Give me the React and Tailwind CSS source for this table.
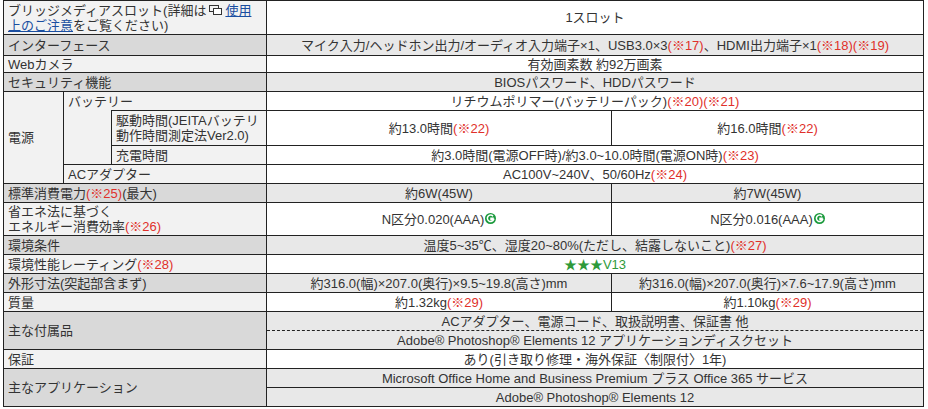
import React from 'react';

const B = 'border border-[#222] p-0';
const L1 = `${B} bg-[#f2f2f2] pl-1 text-left align-middle`;
const L2 = `${B} bg-[#d9d9d9] pl-1 text-left align-middle`;
const V1 = `${B} bg-white text-center align-middle`;
const V2 = `${B} bg-[#e8e8e8] text-center align-middle`;

const R = ({ children }) => <span className="text-[#e0302a]">{children}</span>;

const Eco = () => (
  <svg width="11" height="11" viewBox="0 0 11 11" className="inline-block align-top ml-px mt-[1px]">
    <circle cx="5.5" cy="5.5" r="5.5" fill="#1a9a3c" />
    <path d="M8 3.2 A3.2 3.2 0 1 0 8.6 6.4 L6 6.4 L6 5.2 L8.8 5.2" fill="none" stroke="#fff" strokeWidth="1.5" />
  </svg>
);

const WinIcon = () => (
  <svg width="13" height="10" viewBox="0 0 13 10" className="inline-block align-middle mx-[3px] -mt-[2px]">
    <rect x="0.5" y="0.5" width="9" height="6" fill="none" stroke="#333" />
    <rect x="4.5" y="3.5" width="8" height="6" fill="#fff" stroke="#333" />
  </svg>
);

export default function App() {
  return (
    <div className="bg-white w-[928px] h-[409px] overflow-hidden text-[13px] leading-[15px] text-[#333]"
      style={{ fontFamily: '"Liberation Sans","Noto Sans CJK JP",sans-serif' }}>
      <table className="ml-[3px] w-[920px] table-fixed border-collapse">
        <colgroup>
          <col className="w-[60px]" />
          <col className="w-[48px]" />
          <col className="w-[155px]" />
          <col className="w-[345px]" />
          <col className="w-[312px]" />
        </colgroup>
        <tbody>
          <tr className="h-[34px]">
            <td colSpan={3} className={L1}>
              ブリッジメディアスロット(詳細は<WinIcon /><a className="text-[#1a4ea0] underline">使用<br />上のご注意</a>をご覧ください)
            </td>
            <td colSpan={2} className={V1}>1スロット</td>
          </tr>
          <tr className="h-[21px]">
            <td colSpan={3} className={L2}>インターフェース</td>
            <td colSpan={2} className={V2}>マイク入力/ヘッドホン出力/オーディオ入力端子×1、USB3.0×3<R>(※17)</R>、HDMI出力端子×1<R>(※18)(※19)</R></td>
          </tr>
          <tr className="h-[17px]">
            <td colSpan={3} className={L1}>Webカメラ</td>
            <td colSpan={2} className={V1}>有効画素数 約92万画素</td>
          </tr>
          <tr className="h-[19px]">
            <td colSpan={3} className={L2}>セキュリティ機能</td>
            <td colSpan={2} className={V2}>BIOSパスワード、HDDパスワード</td>
          </tr>
          <tr className="h-[19px]">
            <td rowSpan={4} className={L1}>電源</td>
            <td colSpan={2} className={L1}>バッテリー</td>
            <td colSpan={2} className={V1}>リチウムポリマー(バッテリーパック)<R>(※20)(※21)</R></td>
          </tr>
          <tr className="h-[35px]">
            <td rowSpan={2} className={`${B} bg-[#f2f2f2] [border-top-style:hidden]`}></td>
            <td className={L1}>駆動時間(JEITAバッテリ<br />動作時間測定法Ver2.0)</td>
            <td className={V1}>約13.0時間<R>(※22)</R></td>
            <td className={V1}>約16.0時間<R>(※22)</R></td>
          </tr>
          <tr className="h-[19px]">
            <td className={L1}>充電時間</td>
            <td colSpan={2} className={V1}>約3.0時間(電源OFF時)/約3.0~10.0時間(電源ON時)<R>(※23)</R></td>
          </tr>
          <tr className="h-[19px]">
            <td colSpan={2} className={L1}>ACアダプター</td>
            <td colSpan={2} className={V1}>AC100V~240V、50/60Hz<R>(※24)</R></td>
          </tr>
          <tr className="h-[19px]">
            <td colSpan={3} className={L2}>標準消費電力<R>(※25)</R>(最大)</td>
            <td className={V2}>約6W(45W)</td>
            <td className={V2}>約7W(45W)</td>
          </tr>
          <tr className="h-[33px]">
            <td colSpan={3} className={L1}>省エネ法に基づく<br />エネルギー消費効率<R>(※26)</R></td>
            <td className={V1}>N区分0.020(AAA)<Eco /></td>
            <td className={V1}>N区分0.016(AAA)<Eco /></td>
          </tr>
          <tr className="h-[19px]">
            <td colSpan={3} className={L2}>環境条件</td>
            <td colSpan={2} className={V2}>温度5~35℃、湿度20~80%(ただし、結露しないこと)<R>(※27)</R></td>
          </tr>
          <tr className="h-[19px]">
            <td colSpan={3} className={L1}>環境性能レーティング<R>(※28)</R></td>
            <td colSpan={2} className={V1}><span className="text-[#2e9a3a]">★★★V13</span></td>
          </tr>
          <tr className="h-[19px]">
            <td colSpan={3} className={L2}>外形寸法(突起部含まず)</td>
            <td className={V2}>約316.0(幅)×207.0(奥行)×9.5~19.8(高さ)mm</td>
            <td className={V2}>約316.0(幅)×207.0(奥行)×7.6~17.9(高さ)mm</td>
          </tr>
          <tr className="h-[19px]">
            <td colSpan={3} className={L1}>質量</td>
            <td className={V1}>約1.32kg<R>(※29)</R></td>
            <td className={V1}>約1.10kg<R>(※29)</R></td>
          </tr>
          <tr className="h-[38px]">
            <td colSpan={3} className={L2}>主な付属品</td>
            <td colSpan={2} className={V2}>
              <div className="h-[19px] flex items-center justify-center border-b border-dashed border-[#222]">ACアダプター、電源コード、取扱説明書、保証書 他</div>
              <div className="h-[18px] flex items-center justify-center">Adobe® Photoshop® Elements 12 アプリケーションディスクセット</div>
            </td>
          </tr>
          <tr className="h-[19px]">
            <td colSpan={3} className={L1}>保証</td>
            <td colSpan={2} className={V1}>あり(引き取り修理・海外保証〈制限付〉1年)</td>
          </tr>
          <tr className="h-[38px]">
            <td colSpan={3} className={L2}>主なアプリケーション</td>
            <td colSpan={2} className={V2}>
              <div className="h-[19px] flex items-center justify-center border-b border-[#222]">Microsoft Office Home and Business Premium プラス Office 365 サービス</div>
              <div className="h-[18px] flex items-center justify-center">Adobe® Photoshop® Elements 12</div>
            </td>
          </tr>
        </tbody>
      </table>
    </div>
  );
}
